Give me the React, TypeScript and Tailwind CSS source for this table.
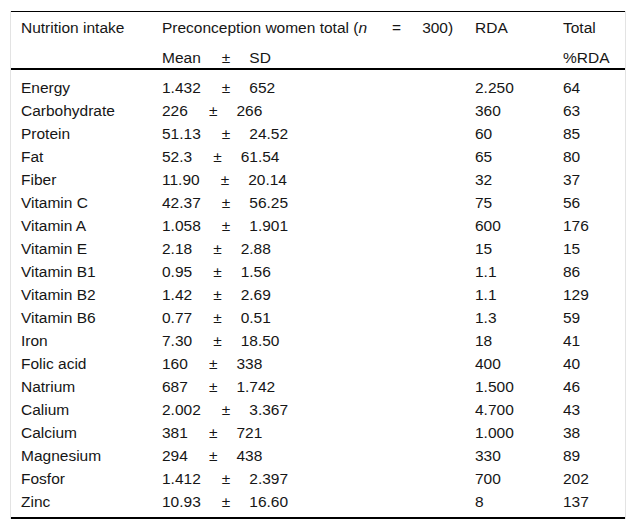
const ROWS: [string, string, string, string, string][] = [
  ['Energy', '1.432', '652', '2.250', '64'],
  ['Carbohydrate', '226', '266', '360', '63'],
  ['Protein', '51.13', '24.52', '60', '85'],
  ['Fat', '52.3', '61.54', '65', '80'],
  ['Fiber', '11.90', '20.14', '32', '37'],
  ['Vitamin C', '42.37', '56.25', '75', '56'],
  ['Vitamin A', '1.058', '1.901', '600', '176'],
  ['Vitamin E', '2.18', '2.88', '15', '15'],
  ['Vitamin B1', '0.95', '1.56', '1.1', '86'],
  ['Vitamin B2', '1.42', '2.69', '1.1', '129'],
  ['Vitamin B6', '0.77', '0.51', '1.3', '59'],
  ['Iron', '7.30', '18.50', '18', '41'],
  ['Folic acid', '160', '338', '400', '40'],
  ['Natrium', '687', '1.742', '1.500', '46'],
  ['Calium', '2.002', '3.367', '4.700', '43'],
  ['Calcium', '381', '721', '1.000', '38'],
  ['Magnesium', '294', '438', '330', '89'],
  ['Fosfor', '1.412', '2.397', '700', '202'],
  ['Zinc', '10.93', '16.60', '8', '137'],
];

const GRID = 'grid grid-cols-[141px_313px_88px_1fr] pl-[10px]';

function PlusMinus({ left, right }: { left: string; right: string }) {
  return (
    <span className="whitespace-nowrap">
      <span>{left}</span>
      <span className="ml-[21px] mr-[19px]">±</span>
      <span>{right}</span>
    </span>
  );
}

export default function App() {
  return (
    <div className="bg-white min-h-[530px] pt-[11px] px-[10px] font-['Liberation_Sans',Arial,sans-serif] text-[15.5px] text-[#161616]">
      <div className="border-x border-[#e3e3e3]">
        <div className="border-t border-b-2 border-black">
          {/* header */}
          <div className="border-b-2 border-black">
            <div className={`${GRID} h-[31px] pt-[4px] leading-[23px]`}>
              <div>Nutrition intake</div>
              <div className="whitespace-nowrap">
                Preconception women total (<span className="italic">n</span>
                <span className="ml-[25px] mr-[21px]">=</span>300)
              </div>
              <div>RDA</div>
              <div>Total</div>
            </div>
            <div className={`${GRID} h-[25px] pt-[6px] leading-[18px]`}>
              <div />
              <PlusMinus left="Mean" right="SD" />
              <div />
              <div>%RDA</div>
            </div>
          </div>

          {/* body */}
          <div className="pt-[6px] pb-[4px]">
            {ROWS.map(([name, mean, sd, rda, pct]) => (
              <div key={name} className={`${GRID} h-[23px] leading-[23px]`}>
                <div>{name}</div>
                <PlusMinus left={mean} right={sd} />
                <div>{rda}</div>
                <div>{pct}</div>
              </div>
            ))}
          </div>
        </div>
      </div>
    </div>
  );
}
